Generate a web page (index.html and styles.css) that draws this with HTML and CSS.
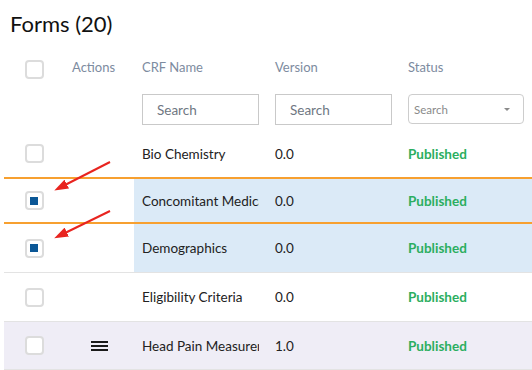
FILE: index.html
```html
<!DOCTYPE html>
<html lang="en">

<head>
    <meta charset="UTF-8">
    <title>Forms</title>
    <link rel="stylesheet" href="styles.css">
</head>

<body>
    <h1 class="page-title">Forms (20)</h1>

    <div class="forms-grid">
        <div class="row head">
            <div class="cell check"><span class="checkbox"></span></div>
            <div class="cell">Actions</div>
            <div class="cell">CRF Name</div>
            <div class="cell">Version</div>
            <div class="cell">Status</div>
        </div>

        <div class="row filters">
            <div class="cell check"></div>
            <div class="cell"></div>
            <div class="cell"><input class="search" type="text" placeholder="Search"></div>
            <div class="cell"><input class="search" type="text" placeholder="Search"></div>
            <div class="cell">
                <div class="select">
                    <span>Search</span>
                    <span class="caret"></span>
                </div>
            </div>
        </div>

        <div class="row item">
            <div class="cell check"><span class="checkbox"></span></div>
            <div class="cell"></div>
            <div class="cell name"><span>Bio Chemistry</span></div>
            <div class="cell">0.0</div>
            <div class="cell status">Published</div>
        </div>

        <div class="row item selected active">
            <div class="cell check"><span class="checkbox checked"></span></div>
            <div class="cell"></div>
            <div class="cell name"><span>Concomitant Medications</span></div>
            <div class="cell">0.0</div>
            <div class="cell status">Published</div>
        </div>

        <div class="row item tall selected">
            <div class="cell check"><span class="checkbox checked"></span></div>
            <div class="cell"></div>
            <div class="cell name"><span>Demographics</span></div>
            <div class="cell">0.0</div>
            <div class="cell status">Published</div>
        </div>

        <div class="row item tall">
            <div class="cell check"><span class="checkbox"></span></div>
            <div class="cell"></div>
            <div class="cell name"><span>Eligibility Criteria</span></div>
            <div class="cell">0.0</div>
            <div class="cell status">Published</div>
        </div>

        <div class="row item hover">
            <div class="cell check"><span class="checkbox"></span></div>
            <div class="cell actions">
                <span class="menu-icon"><i></i><i></i><i></i></span>
            </div>
            <div class="cell name"><span>Head Pain Measurement</span></div>
            <div class="cell">1.0</div>
            <div class="cell status">Published</div>
        </div>
    </div>

    <!-- annotation arrows -->
    <svg class="arrows" width="532" height="370" viewBox="0 0 532 370">
        <defs>
            <marker id="head" markerWidth="7" markerHeight="5" refX="1" refY="2.5" orient="auto" markerUnits="strokeWidth">
                <path d="M0,0 L7,2.5 L0,5 Z" fill="#e8241f" />
            </marker>
        </defs>
        <line x1="110" y1="162" x2="65" y2="185" stroke="#e8241f" stroke-width="2" marker-end="url(#head)" />
        <line x1="110" y1="211" x2="65" y2="233" stroke="#e8241f" stroke-width="2" marker-end="url(#head)" />
    </svg>
</body>

</html>
```

FILE: styles.css
```css
body {
    font-family: Lato, "Liberation Sans", sans-serif;
    margin: 0;
    padding: 0;
    background-color: #ffffff;
    color: #222;
    overflow: hidden;
}

.page-title {
    margin: 0;
    padding: 10px 0 0 10px;
    height: 35px;
    font-size: 22px;
    font-weight: 400;
    color: #111;
}

.forms-grid {
    margin-left: 4px;
}

.row {
    display: grid;
    grid-template-columns: 60px 70px 133px 133px 140px;
    align-items: center;
    box-sizing: border-box;
}

.cell {
    padding: 0 8px;
    height: 100%;
    display: flex;
    align-items: center;
    font-size: 13.5px;
    white-space: nowrap;
}

.cell.check {
    justify-content: center;
    padding: 0;
}

/* header */
.row.head {
    height: 44px;
}

.row.head .cell {
    color: #7d8ba0;
    font-size: 13px;
}

.row.filters {
    height: 41px;
}

.search {
    width: 117px;
    height: 31px;
    box-sizing: border-box;
    border: 1px solid #c9c9c9;
    border-radius: 0;
    padding: 0 14px;
    font-family: inherit;
    font-size: 13.5px;
    color: #333;
}

.search::placeholder {
    color: #6f7782;
}

.select {
    width: 116px;
    height: 30px;
    box-sizing: border-box;
    border: 1px solid #cdcdcd;
    border-radius: 4px;
    padding: 0 13px 0 5px;
    display: flex;
    align-items: center;
    justify-content: space-between;
    font-size: 11.5px;
    color: #8a8a8a;
    margin-top: -1px;
}

.caret {
    width: 0;
    height: 0;
    border-left: 3px solid transparent;
    border-right: 3px solid transparent;
    border-top: 3px solid #8a8a8a;
}

/* body rows */
.row.item {
    height: 48px;
    border-bottom: 1px solid #e3e3e3;
}

.row.item.tall {
    height: 49px;
}

.row.selected .cell:nth-child(n+3) {
    background-color: #dbeaf7;
}

.row.active {
    margin-top: -1px;
    height: 47px;
    border-top: 2px solid #f7a030;
    border-bottom: 2px solid #f7a030;
}

.row.hover {
    background-color: #efedf6;
}

.cell.name span {
    display: block;
    width: 117px;
    overflow: hidden;
}

.cell.status {
    color: #2bae60;
    font-weight: 700;
}

/* checkbox */
.checkbox {
    width: 19px;
    height: 19px;
    box-sizing: border-box;
    border: 2px solid #dcdcdc;
    border-radius: 4px;
    background: #fff;
    display: flex;
    align-items: center;
    justify-content: center;
}

.checkbox.checked::after {
    content: "";
    width: 8px;
    height: 8px;
    background-color: #0b5796;
}

.row.head .checkbox {
    margin-top: 4px;
}

/* hamburger */
.cell.actions {
    justify-content: center;
}

.menu-icon {
    display: flex;
    flex-direction: column;
    gap: 2px;
}

.menu-icon i {
    display: block;
    width: 17px;
    height: 2px;
    background-color: #1a1a1a;
}

.arrows {
    position: absolute;
    left: 0;
    top: 0;
    pointer-events: none;
}
```
